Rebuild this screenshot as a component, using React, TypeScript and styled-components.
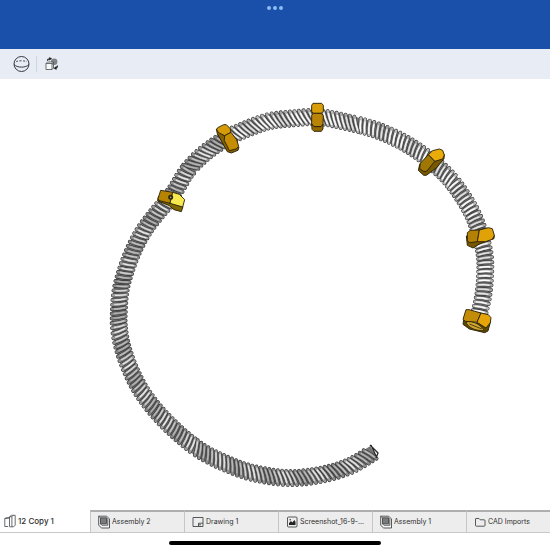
import React from 'react';
import styled, { createGlobalStyle } from 'styled-components';

const GlobalStyle = createGlobalStyle`
  *, *::before, *::after { box-sizing: border-box; }
  body { margin: 0; background: #fff; font-family: Inter, 'Liberation Sans', sans-serif; }
`;

const Page = styled.div`
  display: flex;
  flex-direction: column;
  min-height: 100vh;
  overflow: hidden;
  background: #fff;
`;

const Header = styled.header`
  display: flex;
  justify-content: center;
  height: 49px;
  padding-top: 6px;
  background: #1b50aa;
`;

const MoreButton = styled.button`
  display: flex;
  align-items: center;
  justify-content: center;
  gap: 2px;
  width: 24px;
  height: 4px;
  padding: 0;
  border: 0;
  background: transparent;
`;

const Dot = styled.span`
  width: 4px;
  height: 4px;
  border-radius: 50%;
  background: #8dbcf2;
`;

const Toolbar = styled.div`
  display: flex;
  align-items: center;
  height: 30px;
  padding: 0 12px;
  background: #e8edf5;
`;

const ToolButton = styled.button`
  display: flex;
  align-items: center;
  justify-content: center;
  width: 18px;
  height: 18px;
  padding: 0;
  border: 0;
  background: transparent;
`;

const Divider = styled.span`
  width: 1px;
  height: 16px;
  margin: 0 6px;
  background: #cfd5dd;
`;

const Viewport = styled.main`
  display: flex;
  flex: 1;
  min-height: 0;
`;

const Model = styled.svg`
  display: block;
  width: 100%;
  height: auto;
`;

const TabBar = styled.nav`
  display: grid;
  grid-template-columns: 90px repeat(4, 94px) minmax(94px, 1fr);
  height: 23px;
  border-bottom: 1px solid #c8c8c8;
`;

const Tab = styled.button<{ $active?: boolean }>`
  display: flex;
  align-items: center;
  gap: 2px;
  min-width: 0;
  padding: 0 0 0 ${(p) => (p.$active ? 4 : 7)}px;
  border: 0;
  border-top: ${(p) => (p.$active ? '0' : '2px solid #aeaeae')};
  border-left: ${(p) => (p.$active ? '0' : '1px solid #c6c6c6')};
  background: ${(p) => (p.$active ? '#fff' : '#ededed')};
  color: #2e2e2e;
  font-family: inherit;
  font-size: ${(p) => (p.$active ? 8 : 7)}px;
  font-weight: ${(p) => (p.$active ? 500 : 400)};
  line-height: 12px;
  white-space: nowrap;
`;

const TabIcon = styled.svg`
  flex: none;
  width: 12px;
  height: 14px;
`;

const Footer = styled.footer`
  display: flex;
  justify-content: center;
  height: 17px;
  padding-top: 8px;
`;

const HomeIndicator = styled.span`
  width: 38.4%;
  height: 4px;
  border-radius: 2px;
  background: #000;
`;

type Pt = [number, number];

const spine: Pt[] = [
  [478, 318], [483, 297], [485, 277], [485, 257], [481, 238], [474, 217],
  [463, 197], [449, 178], [432, 162], [413, 148], [393, 137], [370, 128],
  [337, 120], [317, 117], [297, 118], [270, 121], [249, 128], [227, 138],
  [205, 153], [188, 170], [178, 186], [170, 198], [158, 212], [145, 229],
  [135, 247], [127, 267], [121, 288], [119, 308], [119, 328], [123, 349],
  [131, 371], [142, 392], [158, 413], [178, 433], [201, 451], [227, 464],
  [253, 473], [287, 478], [320, 475], [350, 466], [374, 452],
];

function curvePoint(a: Pt, b: Pt, c: Pt, d: Pt, t: number): Pt {
  const f = (i: 0 | 1) =>
    0.5 * (2 * b[i] + (c[i] - a[i]) * t + (2 * a[i] - 5 * b[i] + 4 * c[i] - d[i]) * t * t +
      (3 * b[i] - a[i] - 3 * c[i] + d[i]) * t * t * t);
  return [f(0), f(1)];
}

function samplePath(): Pt[] {
  const dense: Pt[] = [];
  for (let i = 0; i < spine.length - 1; i++) {
    const a = spine[Math.max(0, i - 1)];
    const d = spine[Math.min(spine.length - 1, i + 2)];
    for (let j = 0; j < 160; j++) dense.push(curvePoint(a, spine[i], spine[i + 1], d, j / 160));
  }
  dense.push(spine[spine.length - 1]);
  const out: Pt[] = [dense[0]];
  let travelled = 0;
  for (let i = 1; i < dense.length; i++) {
    travelled += Math.hypot(dense[i][0] - dense[i - 1][0], dense[i][1] - dense[i - 1][1]);
    if (travelled >= 0.25) {
      out.push(dense[i]);
      travelled -= 0.25;
    }
  }
  return out;
}

const samples = samplePath();
const PITCH = 18;

function buildThreads() {
  const threads: { d: string; shine: string; tone: string; light: string }[] = [];
  const count = Math.floor((samples.length - 16) / PITCH);
  for (let n = 0; n <= count; n++) {
    const i = Math.round(8 + n * PITCH);
    const [x, y] = samples[i];
    const p = samples[Math.max(0, i - 16)];
    const q = samples[Math.min(samples.length - 1, i + 16)];
    const len = Math.hypot(q[0] - p[0], q[1] - p[1]);
    const tx = (q[0] - p[0]) / len;
    const ty = (q[1] - p[1]) / len;
    const ratio = i / samples.length;
    const slant = ratio < 0.15 ? 0.4 : ratio < 0.27 ? 1.6 : ratio < 0.46 ? 3.6 : ratio < 0.65 ? 1.2 : ratio < 0.8 ? 1.8 : 3.2;
    const at = (r: number, s: number) =>
      `${(x - ty * r + tx * s).toFixed(2)} ${(y + tx * r + ty * s).toFixed(2)}`;
    const d = `M${at(7, slant)}Q${at(0, 0.8)} ${at(-7, -slant)}`;
    const shine = `M${at(5, slant * 0.7)}Q${at(0, 0.8)} ${at(-6, -slant * 0.85)}`;
    const right = ratio < 0.4;
    const wave = (Math.sin(n * 0.83) + 1) / 2;
    const g = Math.round((right ? 162 : 132) + wave * 26);
    const w = Math.round((right ? 226 : 178) + wave * 56);
    threads.push({ d, shine, tone: `rgb(${g},${g},${g})`, light: `rgb(${w},${w},${w})` });
  }
  return threads;
}

const threads = buildThreads();

interface Face {
  points: string;
  fill: string;
}

interface NutShape {
  x: number;
  y: number;
  faces: Face[];
  opening?: string;
  hole?: Pt;
}

const nuts: NutShape[] = [
  {
    x: 150, y: 95,
    faces: [
      { points: '25,305 24,318 58,332 72,344 94,350 99,335 62,320', fill: '#806500' },
      { points: '32,286 68,292 60,325 28,317 24,311', fill: '#b68400' },
      { points: '68,292 88,298 104,314 98,336 60,325', fill: '#f6e84d' },
    ],
    hole: [62, 307],
  },
  {
    x: 150, y: 95,
    faces: [
      { points: '199,102 202,116 232,170 244,174 264,166 267,157 220,120', fill: '#846000' },
      { points: '203,98 221,89 229,89 240,100 243,112 224,122 206,113 200,104', fill: '#d59a05' },
      { points: '224,122 243,112 260,134 266,154 258,162 238,167 231,152 223,137', fill: '#c48d04' },
    ],
  },
  {
    x: 270, y: 95,
    faces: [
      { points: '125,31 129,25 155,25 160,31 160,49 154,55 130,55 125,49', fill: '#d99d09' },
      { points: '130,55 154,55 160,62 159,88 153,95 132,95 125,87 125,61', fill: '#b98406' },
      { points: '125,87 132,95 153,95 159,88 159,102 154,109 132,109 126,103', fill: '#956900' },
    ],
  },
  {
    x: 380, y: 120,
    faces: [
      { points: '119,133 115,151 131,166 139,166 169,144 192,116 193,104 151,130', fill: '#775700' },
      { points: '145,104 158,92 178,87 188,91 193,105 188,117 164,124', fill: '#e9ac08' },
      { points: '145,104 164,124 141,153 132,155 119,146 121,130', fill: '#a17703' },
    ],
  },
  {
    x: 440, y: 220,
    faces: [
      { points: '79,48 82,76 99,84 118,72 138,64 162,56 163,45', fill: '#775700' },
      { points: '82,38 91,31 118,30 112,65 90,68 82,63', fill: '#b48006' },
      { points: '118,30 145,23 157,26 163,46 157,58 137,65 112,65', fill: '#e0a207' },
    ],
  },
  {
    x: 440, y: 220,
    faces: [
      { points: '71,300 69,313 88,327 134,338 144,333 152,304 110,311', fill: '#5e4700' },
      { points: '78,269 87,269 123,279 111,307 76,304 69,298', fill: '#c38c08' },
      { points: '123,279 145,284 153,293 151,308 138,324 111,307', fill: '#e5a50a' },
    ],
    opening: 'M78 306C100 301 122 315 133 331C111 334 84 324 78 306M88 312l38 15',
  },
];

function Nut({ x, y, faces, opening, hole }: NutShape) {
  return (
    <g transform={`translate(${x} ${y}) scale(.3333)`} stroke="#2b2307" strokeWidth="2.8" strokeLinejoin="round">
      {faces.map((f) => <polygon key={f.points} points={f.points} fill={f.fill} />)}
      {opening && <path d={opening} fill="#d0a62c" strokeWidth="2.4" />}
      {hole && <circle cx={hole[0]} cy={hole[1]} r="5" fill="#a5a08e" strokeWidth="5" />}
    </g>
  );
}

function SphereIcon() {
  return (
    <svg width="18" height="18" viewBox="0 0 18 18" fill="none" stroke="#353a40" strokeWidth="1">
      <circle cx="9.5" cy="9" r="7.5" />
      <path d="M2 9.5C5 13 14 13 17 9.5" />
      <path d="M4.2 6.5C7 5.6 12 5.6 14.8 6.5" strokeDasharray="2 1.4" strokeWidth=".9" />
    </svg>
  );
}

function TransformIcon() {
  return (
    <svg width="14" height="14" viewBox="0 0 14 14" fill="none" stroke="#4b4e52" strokeWidth=".8">
      <circle cx="9.2" cy="4.8" r="3.2" fill="#808387" stroke="none" />
      <path d="M1 6.5h6v6H1zM1 6.5l1.5-1.5h6L7 6.5M7 12.5L8.5 11V5" fill="#f8f9fb" />
      <path d="M2.5 3.8C2.5 2.4 3.5 1.8 4.8 1.8M12.5 8.5C12.5 10.2 11.7 11 10.5 11.2" stroke="#222" strokeWidth="1.2" />
      <path d="M4.2 0l3 1.8-3 1.8zM11.5 9l-3 2.2 3 1.8z" fill="#222" stroke="none" />
    </svg>
  );
}

type IconKind = 'part' | 'assembly' | 'drawing' | 'image' | 'folder';

function DocumentIcon({ kind }: { kind: IconKind }) {
  return (
    <TabIcon viewBox="0 0 12 14" fill="none" stroke="#44474a" strokeWidth=".9" strokeLinejoin="round" aria-hidden="true">
      {kind === 'part' && (
        <path d="M.8 4.5l1.6-.8h3M.8 4.5v8h3.4M.8 4.5h2.8l1.8-.8M5.5 12.5V2.8l1.8-1.5h3.9v9.8l-1.6 1.7H5.5M5.5 2.8h2.4v10M7.9 2.8l1.4-1.5" strokeWidth=".8" />
      )}
      {kind === 'assembly' && (
        <>
          <path d="M.7 1.2h8L11.5 4v9H3.7L.7 10.3z" fill="#f4f4f4" />
          <path d="M2.5 2.8h6v6h-6z" fill="#7b7b7b" />
          <path d="M.7 1.2l1.8 1.6M8.5 2.8l1.3 1.4v6H3.9L2.5 8.8" />
        </>
      )}
      {kind === 'drawing' && <path d="M1 2.5h10v9H1zM6.5 11.5V8.2H11M6.5 9.8H9" />}
      {kind === 'image' && (
        <>
          <rect x="1.5" y="2" width="9.5" height="10" rx="1" />
          <path d="M3 10V8l2-2 1.2 1.5L8.5 5l1 2v3z" fill="#222" stroke="none" />
          <circle cx="4.2" cy="4.7" r=".7" fill="#222" stroke="none" />
        </>
      )}
      {kind === 'folder' && <path d="M2 3.5h3l1.2 1.3h4c.5 0 .8.3.8.8v4.8c0 .5-.3.8-.8.8H2.3c-.5 0-.8-.3-.8-.8V4c0-.3.2-.5.5-.5z" />}
    </TabIcon>
  );
}

const tabs: { label: string; kind: IconKind }[] = [
  { label: '12 Copy 1', kind: 'part' },
  { label: 'Assembly 2', kind: 'assembly' },
  { label: 'Drawing 1', kind: 'drawing' },
  { label: 'Screenshot_16-9-...', kind: 'image' },
  { label: 'Assembly 1', kind: 'assembly' },
  { label: 'CAD Imports', kind: 'folder' },
];

export default function App() {
  return (
    <Page>
      <GlobalStyle />
      <Header>
        <MoreButton aria-label="More"><Dot /><Dot /><Dot /></MoreButton>
      </Header>
      <Toolbar>
        <ToolButton aria-label="View"><SphereIcon /></ToolButton>
        <Divider />
        <ToolButton aria-label="Transform"><TransformIcon /></ToolButton>
      </Toolbar>
      <Viewport>
        <Model viewBox="0 79 550 431" role="img" aria-label="Curved threaded rod with six nuts">
          <g fill="none">
            <path d={`M${samples.map((p) => p.join(' ')).join('L')}`} stroke="#767676" strokeWidth="14" />
            {threads.map((t) => (
              <g key={t.d}>
                <path d={t.d} stroke="#333" strokeWidth="3.9" strokeLinecap="round" />
                <path d={t.d} stroke={t.tone} strokeWidth="2.7" strokeLinecap="round" />
                <path d={t.shine} stroke={t.light} strokeWidth="1.4" />
              </g>
            ))}
            <path d="M370 445l8 8-2 5M371 445l5 11" stroke="#292929" strokeWidth="1.3" />
          </g>
          {nuts.map((n) => <Nut key={`${n.x}-${n.faces[0].points}`} {...n} />)}
        </Model>
      </Viewport>
      <TabBar aria-label="Documents">
        {tabs.map((t, i) => (
          <Tab key={t.label} $active={i === 0} aria-current={i === 0 ? 'page' : undefined}>
            <DocumentIcon kind={t.kind} />
            {t.label}
          </Tab>
        ))}
      </TabBar>
      <Footer><HomeIndicator /></Footer>
    </Page>
  );
}
